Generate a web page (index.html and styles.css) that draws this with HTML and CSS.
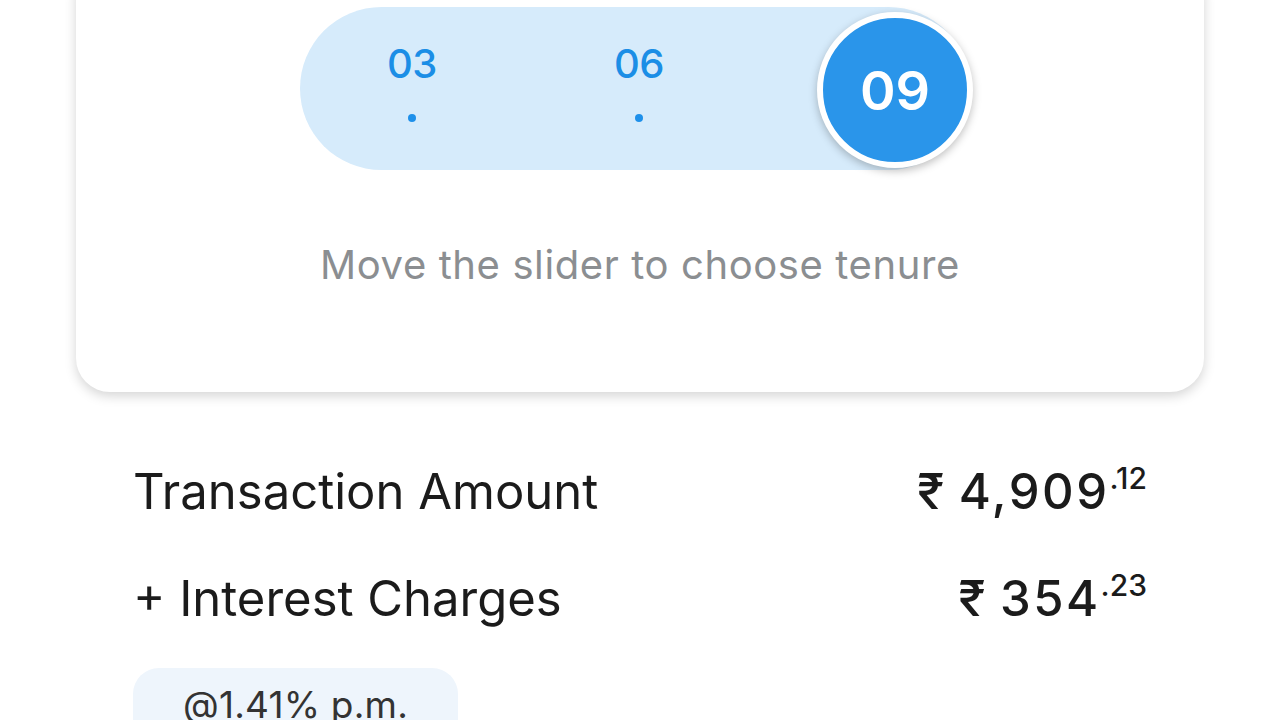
FILE: index.html
```html
<!DOCTYPE html>
<html lang="en">
<head>
  <meta charset="UTF-8" />
  <meta name="viewport" content="width=device-width, initial-scale=1.0"/>
  <title>Choose Tenure</title>
  <link rel="stylesheet" href="styles.css">
</head>
<body>
  <div class="card">
    <div class="slider-wrap">
      <div class="slider">
        <div class="stop">
          <span class="stop-label">03</span>
          <span class="stop-dot"></span>
        </div>
        <div class="stop">
          <span class="stop-label">06</span>
          <span class="stop-dot"></span>
        </div>
        <div class="thumb">09</div>
      </div>
    </div>
    <p class="hint">Move the slider to choose tenure</p>
  </div>

  <div class="summary">
    <div class="row">
      <span class="row-label">Transaction Amount</span>
      <span class="amount"><span class="rupee">₹</span>4,909<sup>.12</sup></span>
    </div>
    <div class="row">
      <span class="row-label">+ Interest Charges</span>
      <span class="amount"><span class="rupee">₹</span>354<sup>.23</sup></span>
    </div>
    <div class="rate">@1.41% p.m.</div>
  </div>
</body>
</html>
```

FILE: styles.css
```css
body {
  margin: 0;
  background-color: #fff;
  color: #1b1b1b;
  font-family: Inter, "Noto Sans", sans-serif;
  overflow: hidden;
}
.card {
  margin: -40px 76px 0;
  padding: 47px 0 104px;
  background: #fff;
  border-radius: 34px;
  box-shadow: 0 4px 12px rgba(0, 0, 0, 0.17);
}
.slider-wrap {
  display: flex;
  padding-left: 224px;
}
.slider {
  position: relative;
  display: flex;
  gap: 115px;
  width: 670px;
  height: 163px;
  padding-left: 56px;
  box-sizing: border-box;
  background-color: #d6ebfb;
  border-radius: 82px;
}
.stop {
  width: 112px;
  display: flex;
  flex-direction: column;
  align-items: center;
  padding-top: 33px;
}
.stop-label {
  font-size: 40px;
  font-weight: 500;
  line-height: 48px;
  color: #1b8ee6;
  letter-spacing: -0.5px;
}
.stop-dot {
  width: 8px;
  height: 8px;
  margin-top: 26px;
  border-radius: 50%;
  background: #1e90ea;
}
.thumb {
  position: absolute;
  right: -3px;
  top: 5px;
  width: 144px;
  height: 144px;
  border: 6px solid #fff;
  border-radius: 50%;
  background: #2a95ea;
  color: #fff;
  font-size: 54px;
  font-weight: 600;
  display: flex;
  align-items: center;
  justify-content: center;
  box-shadow: 0 3px 8px rgba(0, 0, 0, 0.25);
}
.hint {
  margin: 72px 0 0;
  text-align: center;
  font-size: 40px;
  line-height: 46px;
  color: #8b8e91;
  letter-spacing: 0.6px;
}
.summary {
  padding: 70px 133px 0;
}
.row {
  display: flex;
  justify-content: space-between;
  align-items: baseline;
  font-size: 49px;
  line-height: 60px;
  margin-bottom: 47px;
}
.amount {
  font-weight: 500;
  letter-spacing: 2.5px;
}
.rupee {
  margin-right: 12px;
}
.amount sup {
  font-size: 30px;
  letter-spacing: 0;
  vertical-align: 20px;
  line-height: 0;
}
.rate {
  display: inline-block;
  margin-top: -8px;
  padding: 14px 50px 30px;
  background: #eef5fc;
  border-radius: 26px;
  font-size: 37px;
  letter-spacing: 0.2px;
  color: #333;
}
```
